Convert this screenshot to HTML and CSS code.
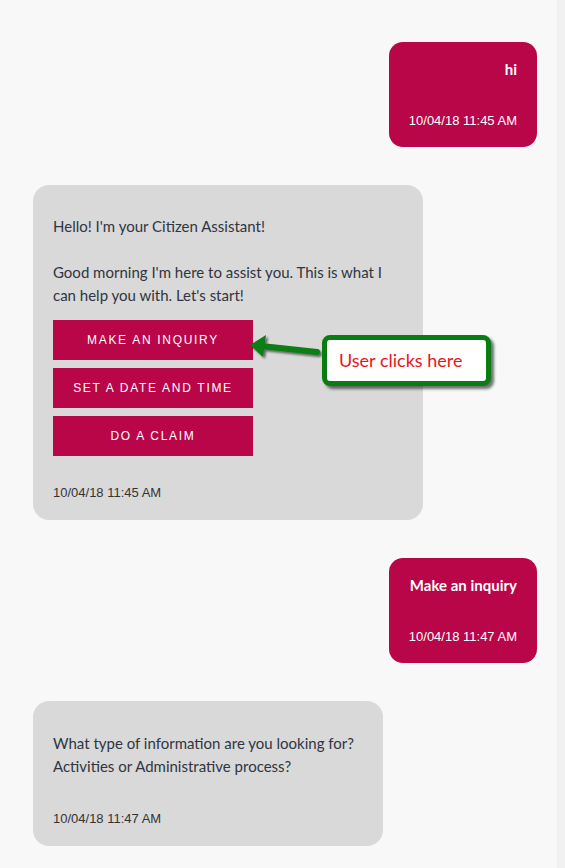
FILE: index.html
```html
<!DOCTYPE html>
<html lang="en">
<head>
<meta charset="utf-8">
<title>Citizen Assistant chat</title>
<link rel="stylesheet" href="styles.css">
</head>
<body>
<div class="app">
  <main class="chat">
    <div class="row row-user">
      <div class="bubble bubble-user">
        <div class="msg">hi</div>
        <div class="ts">10/04/18 11:45 AM</div>
      </div>
    </div>

    <div class="row row-bot">
      <div class="bubble bubble-bot bubble-wide">
        <div class="msg">Hello! I'm your Citizen Assistant!<br><br>Good morning I'm here to assist you. This is what I can help you with. Let's start!</div>
        <div class="options">
          <button class="opt">MAKE AN INQUIRY</button>
          <button class="opt">SET A DATE AND TIME</button>
          <button class="opt">DO A CLAIM</button>
          <svg class="arrow" width="80" height="30" viewBox="0 0 80 30" aria-hidden="true">
            <defs>
              <filter id="sh" x="-20%" y="-40%" width="140%" height="180%">
                <feDropShadow dx="2" dy="2" stdDeviation="1.2" flood-color="#000" flood-opacity="0.55"/>
              </filter>
            </defs>
            <g filter="url(#sh)" fill="#0a7d12">
              <line x1="13" y1="13" x2="69" y2="19" stroke="#0a7d12" stroke-width="6" stroke-linecap="round"/>
              <polygon points="2,12 18,2 15,24"/>
            </g>
          </svg>
          <div class="callout">User clicks here</div>
        </div>
        <div class="ts">10/04/18 11:45 AM</div>
      </div>
    </div>

    <div class="row row-user">
      <div class="bubble bubble-user">
        <div class="msg">Make an inquiry</div>
        <div class="ts">10/04/18 11:47 AM</div>
      </div>
    </div>

    <div class="row row-bot">
      <div class="bubble bubble-bot bubble-mid">
        <div class="msg">What type of information are you looking for?<br>Activities or Administrative process?</div>
        <div class="ts">10/04/18 11:47 AM</div>
      </div>
    </div>
  </main>
  <div class="rail"></div>
</div>
</body>
</html>
```

FILE: styles.css
```css
* { box-sizing: border-box; }

html, body {
  margin: 0;
  padding: 0;
  background: #f8f8f8;
}

.app {
  display: flex;
  min-height: 868px;
}

.chat {
  flex: 1;
  display: flex;
  flex-direction: column;
  gap: 38px;
  padding: 42px 20px 0 33px;
}

.rail {
  width: 8px;
  background: #f1f1f1;
}

.row {
  display: flex;
}

.row-user { justify-content: flex-end; }
.row-bot { justify-content: flex-start; }

.bubble {
  width: fit-content;
}

.bubble-user {
  background: #b80649;
  color: #fff;
  border-radius: 14px;
  padding: 16px 20px 18px;
  text-align: right;
}

.bubble-user .msg {
  font-family: Lato, "Open Sans", sans-serif;
  font-weight: 700;
  font-size: 15px;
  line-height: 23px;
}

.bubble-user .ts { margin-top: 32px; }

.bubble-bot {
  background: #d9d9d9;
  color: #2f3542;
  border-radius: 16px;
  padding: 30px 20px 19px;
  max-width: 390px;
}

.bubble-wide { width: 390px; }
.bubble-mid { width: 350px; padding-top: 31px; }

.bubble-bot .msg {
  font-family: Lato, "Open Sans", sans-serif;
  font-size: 15px;
  line-height: 23px;
}

.ts {
  font-family: "Liberation Sans", Arial, sans-serif;
  font-size: 13px;
  line-height: 16px;
}

.bubble-bot .ts { margin-top: 33px; color: #333; }
.bubble-bot .options + .ts { margin-top: 29px; }

.options {
  position: relative;
  display: flex;
  flex-direction: column;
  gap: 8px;
  margin-top: 13px;
}

.opt {
  width: 200px;
  height: 40px;
  border: 0;
  border-radius: 0;
  background: #b80649;
  color: #fff;
  font-family: "Liberation Sans", Arial, sans-serif;
  font-size: 12px;
  letter-spacing: 1.7px;
  padding: 0;
  cursor: pointer;
}

.arrow {
  position: absolute;
  left: 195px;
  top: 13px;
}

.callout {
  position: absolute;
  left: 269px;
  top: 15px;
  width: 169px;
  height: 51px;
  border: 5px solid #0a7d12;
  border-radius: 8px;
  background: #fff;
  box-shadow: 3px 3px 3px rgba(0, 0, 0, 0.55);
  color: #e8141c;
  font-family: Lato, "Open Sans", sans-serif;
  font-size: 18px;
  line-height: 41px;
  padding-left: 12px;
  white-space: nowrap;
}
```
